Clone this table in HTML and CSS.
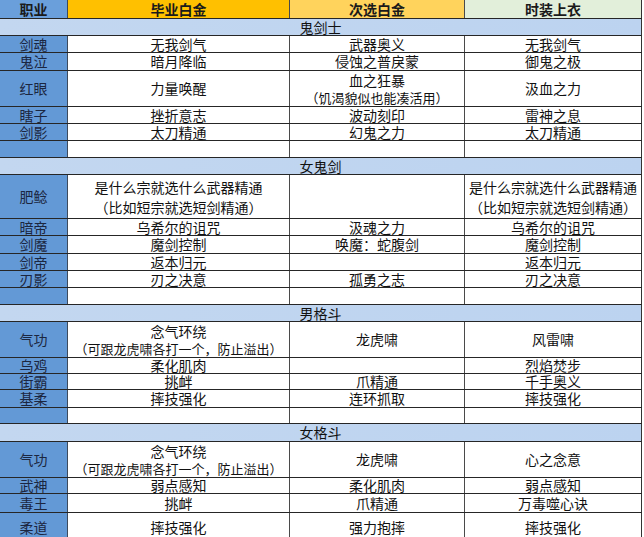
FILE: index.html
```html
<!DOCTYPE html>
<html lang="zh-CN">
<head>
<meta charset="utf-8">
<title>职业技能表</title>
<link rel="stylesheet" href="styles.css">
</head>
<body>
<div class="sheet">
  <div class="row head h19">
    <div class="c c1">职业</div>
    <div class="c c2 gold">毕业白金</div>
    <div class="c c3 amber">次选白金</div>
    <div class="c c4 green">时装上衣</div>
  </div>

  <div class="row group h17">鬼剑士</div>
  <div class="row h17"><div class="c c1">剑魂</div><div class="c c2">无我剑气</div><div class="c c3">武器奥义</div><div class="c c4">无我剑气</div></div>
  <div class="row h18"><div class="c c1">鬼泣</div><div class="c c2">暗月降临</div><div class="c c3">侵蚀之普戾蒙</div><div class="c c4">御鬼之极</div></div>
  <div class="row h36"><div class="c c1">红眼</div><div class="c c2">力量唤醒</div><div class="c c3 two"><span>血之狂暴</span><span class="sm">（饥渴貌似也能凑活用）</span></div><div class="c c4">汲血之力</div></div>
  <div class="row h17"><div class="c c1">瞎子</div><div class="c c2">挫折意志</div><div class="c c3">波动刻印</div><div class="c c4">雷神之息</div></div>
  <div class="row h17"><div class="c c1">剑影</div><div class="c c2">太刀精通</div><div class="c c3">幻鬼之力</div><div class="c c4">太刀精通</div></div>
  <div class="row h17"><div class="c c1"></div><div class="c c2"></div><div class="c c3"></div><div class="c c4"></div></div>

  <div class="row group h17">女鬼剑</div>
  <div class="row h44"><div class="c c1">肥鲶</div><div class="c c2 tall"><span>是什么宗就选什么武器精通</span><span>（比如短宗就选短剑精通）</span></div><div class="c c3"></div><div class="c c4 tall"><span>是什么宗就选什么武器精通</span><span>（比如短宗就选短剑精通）</span></div></div>
  <div class="row h17"><div class="c c1">暗帝</div><div class="c c2">乌希尔的诅咒</div><div class="c c3">汲魂之力</div><div class="c c4">乌希尔的诅咒</div></div>
  <div class="row h18"><div class="c c1">剑魔</div><div class="c c2">魔剑控制</div><div class="c c3">唤魔：蛇腹剑</div><div class="c c4">魔剑控制</div></div>
  <div class="row h17"><div class="c c1">剑帝</div><div class="c c2">返本归元</div><div class="c c3"></div><div class="c c4">返本归元</div></div>
  <div class="row h17"><div class="c c1">刃影</div><div class="c c2">刃之决意</div><div class="c c3">孤勇之志</div><div class="c c4">刃之决意</div></div>
  <div class="row h17"><div class="c c1"></div><div class="c c2"></div><div class="c c3"></div><div class="c c4"></div></div>

  <div class="row group h17">男格斗</div>
  <div class="row h36"><div class="c c1">气功</div><div class="c c2 two"><span>念气环绕</span><span class="xs">（可跟龙虎啸各打一个，防止溢出）</span></div><div class="c c3">龙虎啸</div><div class="c c4">风雷啸</div></div>
  <div class="row h16"><div class="c c1">乌鸡</div><div class="c c2">柔化肌肉</div><div class="c c3"></div><div class="c c4">烈焰焚步</div></div>
  <div class="row h16"><div class="c c1">街霸</div><div class="c c2">挑衅</div><div class="c c3">爪精通</div><div class="c c4">千手奥义</div></div>
  <div class="row h18"><div class="c c1">基柔</div><div class="c c2">摔技强化</div><div class="c c3">连环抓取</div><div class="c c4">摔技强化</div></div>
  <div class="row h16"><div class="c c1"></div><div class="c c2"></div><div class="c c3"></div><div class="c c4"></div></div>

  <div class="row group h18">女格斗</div>
  <div class="row h36"><div class="c c1">气功</div><div class="c c2 two"><span>念气环绕</span><span class="xs">（可跟龙虎啸各打一个，防止溢出）</span></div><div class="c c3">龙虎啸</div><div class="c c4">心之念意</div></div>
  <div class="row h16"><div class="c c1">武神</div><div class="c c2">弱点感知</div><div class="c c3">柔化肌肉</div><div class="c c4">弱点感知</div></div>
  <div class="row h19"><div class="c c1">毒王</div><div class="c c2">挑衅</div><div class="c c3">爪精通</div><div class="c c4">万毒噬心诀</div></div>
  <div class="row h30"><div class="c c1">柔道</div><div class="c c2">摔技强化</div><div class="c c3">强力抱摔</div><div class="c c4">摔技强化</div></div>
</div>
</body>
</html>
```

FILE: styles.css
```css
html, body {
  margin: 0;
  padding: 0;
  background: #ffffff;
}

body {
  font-family: "Noto Sans CJK SC", "Noto Sans", sans-serif;
  font-size: 14px;
  color: #111111;
}

.sheet {
  width: 642px;
  display: flex;
  flex-direction: column;
}

.row {
  display: flex;
  box-sizing: border-box;
  border-bottom: 1px solid #262626;
  width: 642px;
}

.h16 { height: 16px; }
.h17 { height: 17px; }
.h18 { height: 18px; }
.h19 { height: 19px; }
.h30 { height: 30px; }
.h36 { height: 36px; }
.h44 { height: 44px; }

.c {
  box-sizing: border-box;
  height: 100%;
  border-right: 1px solid #4a4a4a;
  display: flex;
  flex-direction: column;
  align-items: center;
  justify-content: center;
  line-height: 15px;
  white-space: nowrap;
  background: #ffffff;
}

.c1 {
  width: 68px;
  background: #6399d6;
  color: #1b2640;
  border-right-color: #3d4a5c;
}

.c2 { width: 222px; }
.c3 { width: 175px; }
.c4 { width: 177px; border-right-color: #333333; }

.two { line-height: 17px; }
.tall { line-height: 20px; }

.sm { font-size: 13px; }
.xs { font-size: 13px; }

.head .c {
  font-weight: bold;
  color: #1a1a1a;
}

.head .c1 { background: #6a9fdb; }
.gold { background: #ffc000 !important; }
.amber { background: #ffd35c !important; }
.green { background: #e2efda !important; }

.group {
  background: linear-gradient(to right, #c3d7f0, #bcd3f0);
  border-right: 1px solid #333333;
  justify-content: center;
  align-items: center;
  line-height: 15px;
  color: #111111;
}
```
